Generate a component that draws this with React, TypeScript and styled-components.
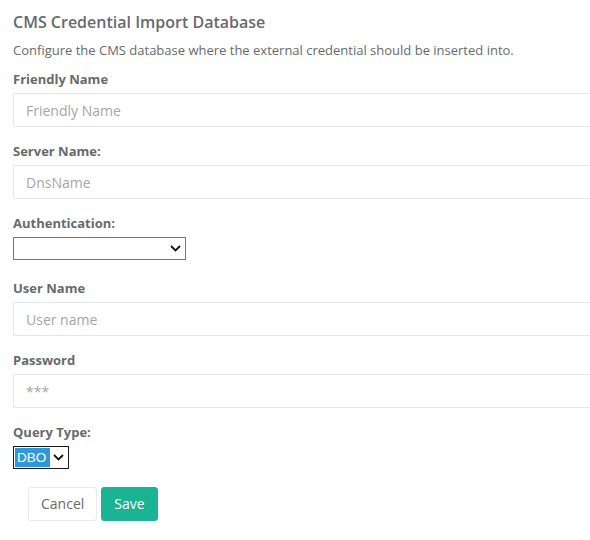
import React, { useState } from 'react';
import styled, { createGlobalStyle } from 'styled-components';

const GlobalStyle = createGlobalStyle`
  html, body {
    margin: 0;
    padding: 0;
    overflow: hidden;
    background: #ffffff;
  }
  body {
    font-family: 'Open Sans', 'Liberation Sans', Arial, sans-serif;
    font-size: 13px;
    color: #676a6c;
  }
`;

const Page = styled.div`
  box-sizing: border-box;
  width: 100%;
  padding: 12px 0 0 13px;
  overflow: hidden;
`;

const Title = styled.h3`
  margin: 0 0 9px;
  font-size: 16px;
  font-weight: 600;
  line-height: 20px;
  color: #676a6c;
`;

const Description = styled.p`
  margin: 0 0 11px;
  line-height: 18px;
`;

const FormGroup = styled.div<{ $gap?: number }>`
  margin-bottom: ${(p) => (p.$gap ?? 15)}px;
`;

const Label = styled.label`
  display: block;
  font-weight: 700;
  line-height: 18px;
  margin-bottom: 5px;
`;

const Input = styled.input`
  display: block;
  box-sizing: border-box;
  width: calc(100% + 10px);
  height: 34px;
  padding: 6px 12px;
  border: 1px solid #e5e6e7;
  border-radius: 1px;
  font-family: inherit;
  font-size: 14px;
  color: #676a6c;
  background: #ffffff;
  outline: none;

  &::placeholder {
    color: #a5a6a7;
  }
`;

const SelectWrap = styled.div<{ $width: number }>`
  position: relative;
  width: ${(p) => p.$width}px;
  height: 23px;
`;

const Select = styled.select<{ $dark?: boolean; $highlight?: number }>`
  appearance: none;
  -webkit-appearance: none;
  box-sizing: border-box;
  width: 100%;
  height: 23px;
  margin: 0;
  padding: 0 0 0 3px;
  border: 1px solid ${(p) => (p.$dark ? '#1a1a1a' : '#767676')};
  border-radius: 0;
  font-family: 'Liberation Sans', Arial, sans-serif;
  font-size: 13.5px;
  color: ${(p) => (p.$highlight ? '#ffffff' : '#000000')};
  background: ${(p) =>
    p.$highlight
      ? `linear-gradient(#2f98d8, #2f98d8) no-repeat 1px 1px / ${p.$highlight}px 19px, #ffffff`
      : '#ffffff'};
  outline: none;
`;

const Chevron = styled.svg`
  position: absolute;
  right: 5px;
  top: 8px;
  pointer-events: none;
`;

const Actions = styled.div`
  display: flex;
  gap: 4px;
  padding-left: 15px;
`;

const Button = styled.button<{ $primary?: boolean }>`
  height: 34px;
  padding: 6px 12px;
  border: 1px solid ${(p) => (p.$primary ? '#1ab394' : '#e7eaec')};
  border-radius: 3px;
  background: ${(p) => (p.$primary ? '#1ab394' : '#ffffff')};
  color: ${(p) => (p.$primary ? '#ffffff' : '#676a6c')};
  font-family: inherit;
  font-size: 14px;
  line-height: 20px;
  cursor: pointer;
`;

const ChevronIcon = () => (
  <Chevron width="11" height="7" viewBox="0 0 11 7">
    <polyline points="1,1 5.5,5.5 10,1" fill="none" stroke="#111" strokeWidth="1.8" />
  </Chevron>
);

const App: React.FC = () => {
  const [auth, setAuth] = useState('');
  const [queryType, setQueryType] = useState('DBO');

  return (
    <Page>
      <GlobalStyle />
      <Title>CMS Credential Import Database</Title>
      <Description>
        Configure the CMS database where the external credential should be inserted into.
      </Description>

      <FormGroup>
        <Label>Friendly Name</Label>
        <Input type="text" placeholder="Friendly Name" />
      </FormGroup>

      <FormGroup>
        <Label>Server Name:</Label>
        <Input type="text" placeholder="DnsName" />
      </FormGroup>

      <FormGroup $gap={19}>
        <Label>Authentication:</Label>
        <SelectWrap $width={173}>
          <Select value={auth} onChange={(e) => setAuth(e.target.value)}>
            <option value=""></option>
            <option value="sql">SQL Server</option>
            <option value="windows">Windows</option>
          </Select>
          <ChevronIcon />
        </SelectWrap>
      </FormGroup>

      <FormGroup>
        <Label>User Name</Label>
        <Input type="text" placeholder="User name" />
      </FormGroup>

      <FormGroup>
        <Label>Password</Label>
        <Input type="password" placeholder="***" />
      </FormGroup>

      <FormGroup $gap={18}>
        <Label>Query Type:</Label>
        <SelectWrap $width={56}>
          <Select
            $dark
            $highlight={35}
            value={queryType}
            onChange={(e) => setQueryType(e.target.value)}
          >
            <option value="DBO">DBO</option>
            <option value="SP">SP</option>
          </Select>
          <ChevronIcon />
        </SelectWrap>
      </FormGroup>

      <Actions>
        <Button>Cancel</Button>
        <Button $primary>Save</Button>
      </Actions>
    </Page>
  );
};

export default App;
